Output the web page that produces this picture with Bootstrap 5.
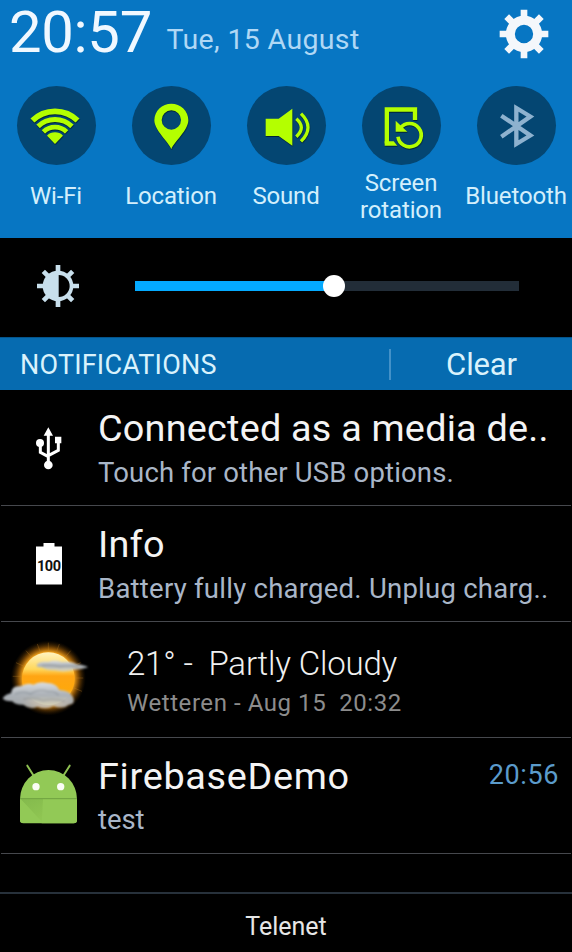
<!DOCTYPE html>
<html lang="en">
<head>
<meta charset="utf-8">
<meta name="viewport" content="width=device-width, initial-scale=1">
<title>Notification panel</title>
<link href="https://cdn.jsdelivr.net/npm/bootstrap@5.3.0/dist/css/bootstrap.min.css" rel="stylesheet">
<style>
body{background:#000;font-family:Roboto,"Liberation Sans",sans-serif;height:952px;overflow:hidden}
svg{display:block;flex:none}
.panel-top{background:#0776c3;height:238px}
.status-line{height:82px;padding:2px 23px 0 9px}
.clock{font-size:58px;line-height:60px;letter-spacing:-.3px;color:#f0f8ff;width:157.5px}
.date{font-size:28.5px;line-height:60px;padding-top:8px;letter-spacing:.35px;color:#b0d8f5}
.gear{margin-top:7px}
.toggles{margin:3.5px 0 0 -1.5px;width:575px}
.toggle{width:115px}
.disc{width:79px;height:79px;border-radius:50%;background:#044672}
.disc .on{fill:#b4ff00;stroke:#b4ff00;filter:drop-shadow(1.5px 3px 1px rgba(0,20,30,.7))}
.disc .off{stroke:#8eb2cf}
.toggle-label{height:63px;font-size:24px;line-height:27px;color:#d3effc;letter-spacing:-.15px}
.toggle-label.two-line{height:64px}
.brightness{height:99px;padding:0 53px 3px 36px}
.slider{margin-left:55px;width:384px}
.slider .progress{height:10.6px;background:#222d38;border-radius:0}
.slider .progress-bar{background:#04aaff}
.thumb{width:22px;height:22px;margin-left:-11px;top:50%;transform:translateY(-50%)}
.section-bar{height:53px;background:#066bb0;border-top:1px solid #04558c;padding-left:20px;color:#d9f2fc}
.section-title{font-size:27px;letter-spacing:.2px;line-height:52px;padding-top:2px;width:369px}
.divider{width:2px;height:31px;background:#4391c8}
.clear-btn{font-size:31px;letter-spacing:-.15px;line-height:52px;padding-top:2px}
.note{height:116px;margin:0 1px}
.note::after{content:"";position:absolute;left:0;right:0;bottom:0;height:1px;background:#46484d}
.note-icon{width:97px;padding-right:2px}
.note-text{padding:15px 12px 0 0}
.note-title{font-size:37.8px;line-height:47px;letter-spacing:.22px;color:#f4f4f4}
.note-title.app{letter-spacing:.7px}
.note-sub{font-size:27.5px;line-height:41px;letter-spacing:.16px;color:#a9b6c8}
.note-sub.wide{letter-spacing:.25px}
.note-sub.short{line-height:39px;letter-spacing:-.1px}
.note-time{font-size:27px;line-height:40px;padding-top:2px;letter-spacing:.6px;color:#5b9bcb}
.weather-text{padding:22px 0 0 29px}
.weather-now,.weather-place{white-space:pre}
.weather-now{font-size:33px;font-weight:300;line-height:40px;letter-spacing:-.18px;color:#f0f0f0}
.weather-place{font-size:24px;line-height:39px;letter-spacing:.56px;color:#8c8c8c}
.carrier{margin-top:38px;height:60px;border-top:2px solid #27313b;font-size:25px;line-height:65px;color:#e6e6e6}
</style>
<script src="https://cdn.jsdelivr.net/npm/bootstrap@5.3.0/dist/js/bootstrap.bundle.min.js"></script>
</head>
<body class="m-0">
<header class="panel-top">
  <div class="status-line d-flex align-items-start text-nowrap">
    <div class="clock">20:57</div>
    <div class="date flex-grow-1">Tue, 15 August</div>
    <svg class="gear" width="50" height="50" viewBox="-75 -75 150 150" fill="none" stroke="#f4f7fb">
      <circle r="41" stroke-width="27"/>
      <path stroke-width="20" d="M0-50V-73M0 50V73M-50 0H-73M50 0H73M-34-34L-52-52M34-34L52-52M-34 34L-52 52M34 34L52 52"/>
    </svg>
  </div>
  <div class="toggles d-flex text-center">
    <div class="toggle d-flex flex-column align-items-center">
      <div class="disc"><svg width="79" height="79" viewBox="51 28 237 237">
        <defs><clipPath id="wedge"><path d="M165 202L70 103V60H260V103Z"/></clipPath></defs>
        <g class="on"><g clip-path="url(#wedge)" fill="none">
          <circle cx="165" cy="201" r="97" stroke-width="17"/>
          <circle cx="165" cy="201" r="72.500" stroke-width="15"/>
          <circle cx="165" cy="201" r="49.500" stroke-width="14"/>
          <circle cx="165" cy="201" r="17" stroke-width="34"/>
        </g></g></svg></div>
      <div class="toggle-label d-flex align-items-center">Wi-Fi</div>
    </div>
    <div class="toggle d-flex flex-column align-items-center">
      <div class="disc"><svg width="79" height="79" viewBox="395 28 237 237">
        <path class="on" stroke-width="0" fill-rule="evenodd" d="M513 218C505 196 462 161 462 131A51 50 0 0 1 564 131C564 161 521 196 513 218ZM513 101A29 29 0 1 0 513 159A29 29 0 1 0 513 101Z"/></svg></div>
      <div class="toggle-label d-flex align-items-center">Location</div>
    </div>
    <div class="toggle d-flex flex-column align-items-center">
      <div class="disc"><svg width="79" height="79" viewBox="50 28 237 237">
        <g class="on"><path stroke-width="0" d="M106 126H145L186 96V207L145 178H106Z"/>
        <path style="fill:none" stroke-width="10" d="M198 126Q228 152 198 180"/>
        <path style="fill:none" stroke-width="10" d="M212 111Q254 152 212 194"/></g></svg></div>
      <div class="toggle-label d-flex align-items-center">Sound</div>
    </div>
    <div class="toggle d-flex flex-column align-items-center">
      <div class="disc"><svg width="79" height="79" viewBox="394 28 237 237">
        <g class="on"><path style="fill:none" stroke-width="13" d="M553 130V98.500H468.500V200.500"/>
        <path stroke-width="0" d="M462 194H489L500 207H462ZM495 132L506 143L530 165H495Z"/>
        <path style="fill:none" stroke-width="11" d="M509 154A35 35 0 1 1 502 180"/></g></svg></div>
      <div class="toggle-label two-line d-flex align-items-center">Screen<br>rotation</div>
    </div>
    <div class="toggle d-flex flex-column align-items-center">
      <div class="disc"><svg width="79" height="79" viewBox="78 28 237 237">
        <path class="off" fill="none" stroke-width="13" d="M151 180L238 119.500L196 94V202L238 176.500L151 117"/></svg></div>
      <div class="toggle-label d-flex align-items-center">Bluetooth</div>
    </div>
  </div>
</header>

<section class="brightness d-flex align-items-center">
  <svg width="44" height="44" viewBox="-66 -66 132 132">
    <path fill="none" stroke="#c8dfec" stroke-width="14" d="M0-40V-63M0 40V63M-40 0H-63M40 0H63M-28-28L-44-44M28-28L44-44M-28 28L-44 44M28 28L44 44"/>
    <circle r="46" fill="#c8dfec"/><path fill="#000" d="M2-33A33 33 0 0 1 2 33Z"/>
  </svg>
  <div class="slider position-relative">
    <div class="progress"><div class="progress-bar" style="width:51.8%"></div></div>
    <div class="thumb position-absolute bg-white rounded-circle" style="left:51.8%"></div>
  </div>
</section>

<div class="section-bar d-flex align-items-center">
  <div class="section-title">NOTIFICATIONS</div>
  <div class="divider"></div>
  <div class="clear-btn flex-grow-1 text-center">Clear</div>
</div>

<main>
  <article class="note position-relative d-flex">
    <div class="note-icon d-flex align-items-center justify-content-center flex-shrink-0">
      <svg width="31" height="44" viewBox="99 89 93 132" fill="#fff" stroke="#fff" stroke-width="0">
        <path d="M145 93L159 118H131ZM165 121H184V141H165Z"/>
        <circle cx="145" cy="206" r="13"/><circle cx="120" cy="140" r="12"/>
        <path fill="none" stroke-width="9" d="M145 110V200M121 145V168L145 181M175 138V162L145 178"/>
      </svg>
    </div>
    <div class="note-text text-nowrap">
      <div class="note-title">Connected as a media de..</div>
      <div class="note-sub">Touch for other USB options.</div>
    </div>
  </article>
  <article class="note position-relative d-flex">
    <div class="note-icon d-flex align-items-center justify-content-center flex-shrink-0">
      <svg width="26" height="42" viewBox="0 0 26 42">
        <path fill="#fff" d="M7.500 0H18.500V3.500H26V41.500H0V3.500H7.500Z"/>
        <text x="13" y="28" text-anchor="middle" font-family="Roboto,sans-serif" font-weight="700" font-size="14.500" textLength="24" fill="#111">100</text>
      </svg>
    </div>
    <div class="note-text text-nowrap">
      <div class="note-title">Info</div>
      <div class="note-sub wide">Battery fully charged. Unplug charg..</div>
    </div>
  </article>
  <article class="note position-relative d-flex">
    <div class="note-icon d-flex align-items-center flex-shrink-0">
      <svg width="90" height="80" viewBox="3 56 270 240">
        <defs>
          <radialGradient id="halo"><stop offset=".68" stop-color="#f7a51c"/><stop offset=".8" stop-color="#a86408" stop-opacity=".75"/><stop offset="1" stop-color="#3a2000" stop-opacity="0"/></radialGradient>
          <linearGradient id="sun" x1="0" y1="0" x2="0" y2="1"><stop offset="0" stop-color="#fff3c0"/><stop offset=".32" stop-color="#ffd75a"/><stop offset=".45" stop-color="#ffa514"/><stop offset=".7" stop-color="#ffa80c"/><stop offset="1" stop-color="#ffd648"/></linearGradient>
          <linearGradient id="cloud" x1="0" y1="0" x2="0" y2="1"><stop offset="0" stop-color="#dcdfe2"/><stop offset=".5" stop-color="#aab0b6"/><stop offset="1" stop-color="#d3d6d8" stop-opacity=".75"/></linearGradient>
          <filter id="soft" x="-10%" y="-20%" width="120%" height="140%"><feGaussianBlur stdDeviation="2.500"/></filter>
        </defs>
        <circle cx="145" cy="170" r="113" fill="url(#halo)"/>
        <path stroke="#c98a28" stroke-opacity=".45" stroke-width="2" d="M145 92V64M120 90L112 68M170 90L178 68M195 108L212 88M95 108L78 88M72 135L48 124M218 135L242 124M64 165H38M225 170H250M222 200L246 210"/>
        <circle cx="145" cy="172" r="79" fill="url(#sun)"/>
        <g filter="url(#soft)">
          <path fill="url(#cloud)" d="M110 130Q120 118 145 121Q165 114 185 122Q215 118 230 129Q255 132 264 138Q245 144 220 146Q190 154 165 147Q140 148 125 138Q110 139 110 130Z"/>
          <path fill="url(#cloud)" d="M8 231Q16 219 33 216Q35 192 62 195Q82 182 100 190Q118 178 142 185Q170 186 178 206Q212 209 219 228Q228 248 205 251Q190 265 160 254Q140 267 112 256Q90 266 70 250Q45 251 37 240Q14 241 8 231Z"/>
          <path fill="none" stroke="#777f88" stroke-opacity=".4" stroke-width="5" d="M45 218Q70 207 92 218Q115 200 145 211Q165 208 176 222M125 132Q155 128 180 136Q210 130 235 137M70 234Q100 226 130 238Q160 230 195 240"/>
        </g>
      </svg>
    </div>
    <div class="weather-text">
      <div class="weather-now">21° -  Partly Cloudy</div>
      <div class="weather-place">Wetteren - Aug 15  20:32</div>
    </div>
  </article>
  <article class="note position-relative d-flex">
    <div class="note-icon d-flex align-items-center justify-content-center flex-shrink-0 pb-1">
      <svg width="62" height="62" viewBox="53 82 186 186">
        <defs><linearGradient id="fold" x1="0" y1="0" x2=".6" y2="1"><stop offset="0" stop-color="#72a741"/><stop offset="1" stop-color="#8ec44f"/></linearGradient></defs>
        <path stroke="#8fc152" stroke-width="6" stroke-linecap="round" d="M81 90L100 120M208 90L189 120"/>
        <path fill="#92c956" d="M59 190A85.500 87 0 0 1 230 190V253Q230 263 220 263H69Q59 263 59 253Z"/>
        <path fill="url(#fold)" d="M61 190H150L128 262Z" opacity=".45"/>
        <path fill="#92c956" d="M61 191L128 262H69Q59 262 59 253V191ZM128 190H230V253Q230 263 220 263H124Z"/>
        <path stroke="#6fa040" stroke-width="3" d="M59 189H230"/>
        <circle cx="107" cy="153" r="11" fill="#fafdf5"/><circle cx="181" cy="153" r="11" fill="#fafdf5"/>
      </svg>
    </div>
    <div class="note-text flex-grow-1">
      <div class="d-flex justify-content-between align-items-start">
        <div class="note-title app">FirebaseDemo</div>
        <div class="note-time">20:56</div>
      </div>
      <div class="note-sub short">test</div>
    </div>
  </article>
</main>

<footer class="carrier text-center">Telenet</footer>
</body>
</html>
